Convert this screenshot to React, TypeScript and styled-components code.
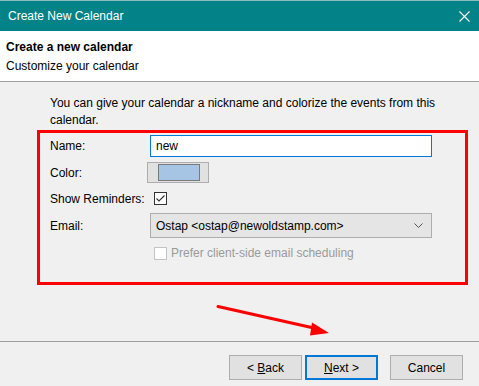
import styled, { createGlobalStyle } from "styled-components";

const GlobalStyle = createGlobalStyle`
    html, body {
        margin: 0;
        padding: 0;
        background: #f0f0f0;
    }
    body {
        font-family: "Liberation Sans", Arial, sans-serif;
        font-size: 12px;
        color: #000;
    }
`;

const Window = styled.div`
    display: flex;
    flex-direction: column;
    width: 479px;
    height: 386px;
    overflow: hidden;
    background: #f0f0f0;
`;

const TitleBar = styled.div`
    display: flex;
    align-items: center;
    justify-content: space-between;
    height: 30px;
    border-top: 1px solid #8cbcbd;
    background: #038387;
    color: #fff;
    padding: 0 9px 0 8px;
    font-size: 12px;
`;

const Header = styled.div`
    display: flex;
    flex-direction: column;
    height: 43px;
    padding: 7px 6px 0;
    background: #fff;
    border-bottom: 1px solid #a0a0a0;
    line-height: 19px;
`;

const HeaderTitle = styled.div`
    font-weight: bold;
`;

const Body = styled.div`
    position: relative;
    display: flex;
    flex-direction: column;
    flex: 1 1;
    padding-top: 13px;
`;

const Intro = styled.p`
    margin: 0 0 1px 50px;
    line-height: 17px;
    white-space: nowrap;
`;

const Highlight = styled.div`
    display: flex;
    flex-direction: column;
    gap: 4px;
    width: 431px;
    margin-left: 37px;
    padding: 2px 0 18px;
    box-sizing: border-box;
    border: 3px solid #ff0000;
`;

const Row = styled.div<{ $h: number }>`
    display: flex;
    align-items: center;
    height: ${p => p.$h}px;
`;

const Label = styled.span`
    width: 110px;
    padding-left: 10px;
    flex: 0 0 auto;
    box-sizing: border-box;
    white-space: nowrap;
`;

const TextInput = styled.div`
    width: 282px;
    height: 22px;
    box-sizing: border-box;
    display: flex;
    align-items: center;
    padding-left: 5px;
    background: #fff;
    border: 1px solid #0078d7;
`;

const ColorButton = styled.div`
    display: flex;
    align-items: center;
    justify-content: center;
    width: 62px;
    height: 21px;
    margin-left: -3px;
    box-sizing: border-box;
    background: #e1e1e1;
    border: 1px solid #adadad;
`;

const Swatch = styled.div<{ $color: string }>`
    width: 42px;
    height: 17px;
    margin-left: 1px;
    box-sizing: border-box;
    background: ${p => p.$color};
    border: 1px solid #7a7a7a;
`;

const Box = styled.span<{ $disabled?: boolean }>`
    display: inline-flex;
    align-items: center;
    justify-content: center;
    width: 13px;
    height: 13px;
    margin-left: 4px;
    box-sizing: border-box;
    background: #fff;
    border: 1px solid ${p => (p.$disabled ? "#c4c4c4" : "#333")};
`;

const Select = styled.div`
    display: flex;
    align-items: center;
    justify-content: space-between;
    width: 282px;
    height: 25px;
    box-sizing: border-box;
    padding: 0 8px 0 5px;
    background: #e5e5e5;
    border: 1px solid #adadad;
`;

const OptionLabel = styled.span<{ $disabled?: boolean }>`
    margin-left: 4px;
    color: ${p => (p.$disabled ? "#9a9a9a" : "#000")};
`;

const Spacer = styled.span`
    width: 110px;
    flex: 0 0 auto;
`;

const Arrow = styled.svg`
    position: absolute;
    left: 0;
    top: 0;
    pointer-events: none;
`;

const Footer = styled.div`
    display: flex;
    justify-content: flex-end;
    align-items: flex-start;
    height: 45px;
    padding: 13px 16px 0 0;
    border-top: 1px solid #a0a0a0;
    box-sizing: border-box;
`;

const Button = styled.button<{ $primary?: boolean; $gap?: number }>`
    width: 73px;
    height: 25px;
    margin-left: ${p => p.$gap ?? 0}px;
    padding: 0;
    font-family: inherit;
    font-size: 12px;
    color: #000;
    background: #e1e1e1;
    border: ${p => (p.$primary ? "2px solid #0078d7" : "1px solid #adadad")};
    u {
        text-decoration: underline;
    }
`;

const Checkmark = () => (
    <svg width="11" height="11" viewBox="0 0 11 11">
        <path d="M1.5 5.5 L4 8 L9.5 2.5" fill="none" stroke="#333" strokeWidth="1.1" />
    </svg>
);

export default function App() {
    return (
        <Window>
            <GlobalStyle />
            <TitleBar>
                <span>Create New Calendar</span>
                <svg width="11" height="11" viewBox="0 0 11 11">
                    <path d="M0.5 0.5 L10.5 10.5 M10.5 0.5 L0.5 10.5" stroke="#fff" strokeWidth="1.1" />
                </svg>
            </TitleBar>
            <Header>
                <HeaderTitle>Create a new calendar</HeaderTitle>
                <div>Customize your calendar</div>
            </Header>
            <Body>
                <Intro>
                    You can give your calendar a nickname and colorize the events from this
                    <br />
                    calendar.
                </Intro>
                <Highlight>
                    <Row $h={22}>
                        <Label>Name:</Label>
                        <TextInput>new</TextInput>
                    </Row>
                    <Row $h={23}>
                        <Label>Color:</Label>
                        <ColorButton>
                            <Swatch $color="#a6c5e5" />
                        </ColorButton>
                    </Row>
                    <Row $h={21}>
                        <Label>Show Reminders:</Label>
                        <Box>
                            <Checkmark />
                        </Box>
                    </Row>
                    <Row $h={25}>
                        <Label>Email:</Label>
                        <Select>
                            <span>Ostap &lt;ostap@newoldstamp.com&gt;</span>
                            <svg width="9" height="5" viewBox="0 0 9 5">
                                <path d="M0.5 0.5 L4.5 4.5 L8.5 0.5" fill="none" stroke="#555" strokeWidth="1" />
                            </svg>
                        </Select>
                    </Row>
                    <Row $h={22}>
                        <Spacer />
                        <Box $disabled />
                        <OptionLabel $disabled>Prefer client-side email scheduling</OptionLabel>
                    </Row>
                </Highlight>
                <Arrow width="479" height="257" viewBox="0 0 479 257">
                    <line x1="218" y1="224.5" x2="316" y2="246.5" stroke="#f00" strokeWidth="3" strokeLinecap="round" />
                    <polygon points="329,251 312,240.5 310,253.5" fill="#f00" />
                </Arrow>
            </Body>
            <Footer>
                <Button>
                    &lt; <u>B</u>ack
                </Button>
                <Button $primary $gap={3}>
                    <u>N</u>ext &gt;
                </Button>
                <Button $gap={12}>Cancel</Button>
            </Footer>
        </Window>
    );
}
